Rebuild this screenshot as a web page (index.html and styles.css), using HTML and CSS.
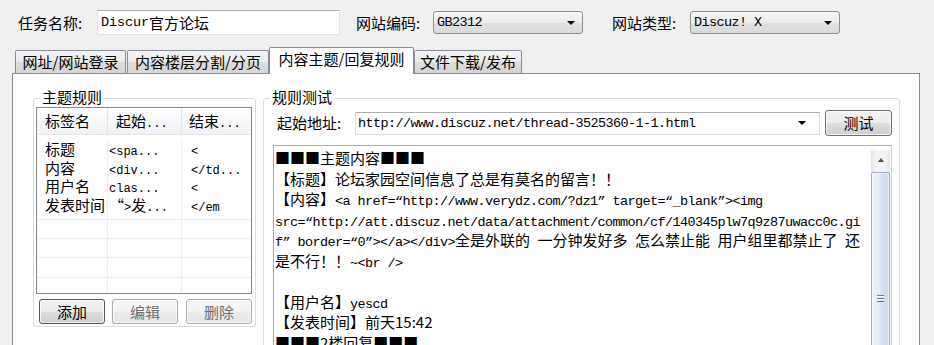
FILE: index.html
```html
<!DOCTYPE html>
<html lang="zh-CN">
<head>
<meta charset="utf-8">
<title>采集任务</title>
<link rel="stylesheet" href="styles.css">
</head>
<body>
<div class="toprow">
  <span class="lbl lbl-name">任务名称:</span>
  <div class="textbox"><span class="m m-name">Discur</span>官方论坛</div>
  <span class="lbl lbl-enc">网站编码:</span>
  <div class="combo"><span class="m">GB2312</span><span class="arrow"></span></div>
  <span class="lbl lbl-type">网站类型:</span>
  <div class="combo"><span class="m">Discuz! X</span><span class="arrow"></span></div>
</div>
<div class="tabs">
  <div class="tab t1">网址/网站登录</div>
  <div class="tab t2">内容楼层分割/分页</div>
  <div class="tab t3 active">内容主题/回复规则</div>
  <div class="tab t4">文件下载/发布</div>
</div>
<div class="panel">
  <div class="group gleft">
    <div class="gtitle">主题规则</div>
    <div class="list">
      <div class="lhead">
        <div class="c c1">标签名</div>
        <div class="c c2">起始<span class="ms">...</span></div>
        <div class="c c3">结束<span class="ms">...</span></div>
      </div>
      <div class="lbody">
        <div class="lrow"><div class="c c1">标题</div><div class="c c2"><span class="ms">&lt;spa...</span></div><div class="c c3"><span class="ms">&lt;</span></div></div>
        <div class="lrow"><div class="c c1">内容</div><div class="c c2"><span class="ms">&lt;div...</span></div><div class="c c3"><span class="ms">&lt;/td...</span></div></div>
        <div class="lrow"><div class="c c1">用户名</div><div class="c c2"><span class="ms">clas...</span></div><div class="c c3"><span class="ms">&lt;</span></div></div>
        <div class="lrow"><div class="c c1">发表时间</div><div class="c c2">“<span class="ms">&gt;</span>发<span class="ms">...</span></div><div class="c c3"><span class="ms">&lt;/em</span></div></div>
        <div class="erow e0"><div class="c c1"></div><div class="c c2"></div><div class="c c3"></div></div>
        <div class="erow e1"><div class="c c1"></div><div class="c c2"></div><div class="c c3"></div></div>
        <div class="erow e1"><div class="c c1"></div><div class="c c2"></div><div class="c c3"></div></div>
        <div class="erow e2"><div class="c c1"></div><div class="c c2"></div><div class="c c3"></div></div>
        <div class="erow e3"><div class="c c1"></div><div class="c c2"></div><div class="c c3"></div></div>
      </div>
    </div>
    <div class="btns">
      <button class="btn def">添加</button>
      <button class="btn dis">编辑</button>
      <button class="btn dis">删除</button>
    </div>
  </div>
  <div class="group gright">
    <div class="gtitle">规则测试</div>
    <div class="urlrow">
      <span class="lbl lbl-url">起始地址:</span>
      <div class="ucombo"><span class="m">http://www.discuz.net/thread-3525360-1-1.html</span><span class="arrow"></span></div>
      <button class="btn test">测试</button>
    </div>
    <div class="tarea">
      <div class="tcontent">
        <div class="ln">■■■主题内容■■■</div>
        <div class="ln">【标题】论坛家园空间信息了总是有莫名的留言！！</div>
        <div class="ln">【内容】<span class="m">&lt;a href=“http://www.verydz.com/?dz1” target=“_blank”&gt;&lt;img</span></div>
        <div class="ln"><span class="m">src=“http://att.discuz.net/data/attachment/common/cf/140345plw7q9z87uwacc0c.gi</span></div>
        <div class="ln"><span class="m">f” border=“0”&gt;&lt;/a&gt;&lt;/div&gt;</span>全是外联的&ensp;一分钟发好多&ensp;怎么禁止能&ensp;用户组里都禁止了&ensp;还</div>
        <div class="ln">是不行！！<span class="m">~&lt;br /&gt;</span></div>
        <div class="ln"></div>
        <div class="ln">【用户名】<span class="m">yescd</span></div>
        <div class="ln">【发表时间】前天15:42</div>
        <div class="ln">■■■2楼回复■■■</div>
      </div>
      <div class="vscroll">
        <div class="sbtn"><span class="uparrow"></span></div>
        <div class="thumb"><span class="grip"></span></div>
      </div>
    </div>
  </div>
</div>
</body>
</html>
```
FILE: styles.css
```css
* { box-sizing: border-box; }
html, body { margin: 0; padding: 0; }
body {
  width: 934px;
  height: 345px;
  overflow: hidden;
  background: #f0f0f0;
  font-family: "Noto Sans CJK SC", "Noto Sans", sans-serif;
  font-size: 15px;
  color: #000;
}
.m {
  font-family: "Liberation Mono", monospace;
  font-size: 13.5px;
  letter-spacing: -0.6px;
}
.ms {
  font-family: "Liberation Mono", monospace;
  font-size: 12px;
}

/* top row */
.toprow {
  display: flex;
  align-items: center;
  height: 25px;
  margin-top: 10px;
  padding-left: 18px;
}
.lbl { white-space: nowrap; line-height: 20px; }
.lbl-name { width: 79px; }
.lbl-enc { width: 77px; margin-left: 16px; }
.lbl-type { width: 78px; margin-left: 29px; }
.textbox {
  width: 243px;
  height: 25px;
  background: #fff;
  border: 1px solid #dbe3ea;
  border-top-color: #abadb3;
  display: flex;
  align-items: center;
  padding-left: 3px;
  line-height: 20px;
}
.m-name { letter-spacing: -0.1px; }
.combo {
  width: 150px;
  height: 23px;
  border: 1px solid #8e8f8f;
  border-radius: 3px;
  background: linear-gradient(#f6f6f6, #ececec 50%, #e2e2e2 51%, #dadada);
  display: flex;
  align-items: center;
  justify-content: space-between;
  padding: 0 7px 0 3px;
}
.arrow {
  width: 0;
  height: 0;
  border-left: 4px solid transparent;
  border-right: 4px solid transparent;
  border-top: 4px solid #000;
}

/* tabs */
.tabs {
  display: flex;
  align-items: flex-end;
  height: 26px;
  margin-top: 12px;
  padding-left: 15px;
  position: relative;
  z-index: 1;
}
.tab {
  height: 23px;
  border: 1px solid #898c95;
  border-bottom: none;
  border-radius: 2px 2px 0 0;
  background: linear-gradient(#f3f3f3, #ebebeb 50%, #dddddd 51%, #d5d5d5);
  text-align: center;
  line-height: 22px;
  white-space: nowrap;
}
.t1 { width: 111px; }
.t2 { width: 142px; margin-left: 1px; }
.t3 { width: 145px; }
.t4 { width: 108px; }
.tab.active {
  height: 27px;
  margin-bottom: -1px;
  background: #fff;
}

/* panel */
.panel {
  display: flex;
  align-items: flex-start;
  width: 908px;
  height: 300px;
  margin-left: 12px;
  border: 1px solid #898c95;
  background: #fff;
  padding-left: 20px;
}
.group {
  position: relative;
  border: 1px solid #d5dfe5;
  border-radius: 3px;
  margin-top: 24px;
}
.gtitle {
  position: absolute;
  top: -12px;
  left: 6px;
  padding: 0 2px;
  background: #fff;
  line-height: 20px;
}
.gleft {
  width: 223px;
  height: 229px;
  padding: 8px 0 0 2px;
}

/* list view */
.list {
  width: 216px;
  height: 187px;
  border: 1px solid #828790;
  background: #fff;
  overflow: hidden;
}
.lhead {
  display: flex;
  height: 27px;
  border-bottom: 1px solid #e2e3e5;
  background: linear-gradient(#ffffff, #f7f8f9 50%, #f1f2f4);
  line-height: 26px;
}
.c { white-space: nowrap; overflow: hidden; }
.c1 { width: 71px; padding-left: 8px; }
.c2 { width: 74px; }
.c3 { width: 69px; }
.lhead .c { border-right: 1px solid #e3e4e6; }
.lhead .c2 { padding-left: 8px; }
.lhead .c3 { padding-left: 7px; border-right: none; }
.lbody { padding-top: 5px; }
.lrow {
  display: flex;
  height: 18.5px;
}
.lrow .c { border-right: 1px solid #f0f0f0; line-height: 18px; height: 18.5px; overflow: visible; }
.lrow .c2 { padding-left: 1px; }
.lrow .c3 { padding-left: 9px; border-right: none; }
.erow { display: flex; border-bottom: 1px solid #ececec; }
.erow .c { border-right: 1px solid #ececec; }
.erow .c3 { border-right: none; }
.e0 { height: 6px; }
.e1 { height: 19px; }
.e2 { height: 20px; }
.e3 { height: 30px; border-bottom: none; }

/* buttons */
.btns {
  display: flex;
  gap: 7px;
  margin-top: 5px;
  padding-left: 3px;
}
.btn {
  width: 66px;
  height: 25px;
  padding: 0;
  font-family: inherit;
  font-size: 15px;
  color: #000;
  border: 1px solid #707070;
  border-radius: 3px;
  background: linear-gradient(#f2f2f2, #ebebeb 50%, #dddddd 51%, #cfcfcf);
  box-shadow: inset 0 0 0 1px rgba(255,255,255,0.7);
  line-height: 22px;
}
.btn.def {
  border-color: #5a5a5a;
}
.btn.dis {
  color: #6f6f6f;
  border-color: #a9acae;
  background: linear-gradient(#f8f8f8, #f2f2f2 50%, #ebebeb 51%, #e6e6e6);
}
.btns .btn:last-child { margin-left: 1px; }

/* right group */
.gright {
  width: 637px;
  height: 280px;
  margin-left: 7px;
  padding: 11px 0 0 9px;
}
.urlrow {
  display: flex;
  align-items: center;
  height: 26px;
}
.lbl-url { width: 78px; margin-left: 4px; }
.ucombo {
  width: 465px;
  height: 23px;
  background: #fff;
  border: 1px solid #dbdfe6;
  border-top-color: #abadb3;
  display: flex;
  align-items: center;
  justify-content: space-between;
  padding: 0 13px 0 2px;
}
.btn.test {
  width: 67px;
  height: 26px;
  margin-left: 5px;
}

/* text area */
.tarea {
  display: flex;
  width: 619px;
  height: 230px;
  margin-top: 9px;
  background: #fff;
  border: 1px solid #c9ced6;
  border-top-color: #abadb3;
  border-left-color: #a4a8ae;
}
.tcontent {
  flex: 1;
  padding: 2px 0 0 1px;
  overflow: hidden;
}
.ln { height: 20.5px; line-height: 20.5px; white-space: pre; }
.vscroll {
  width: 19px;
  margin: 4px 1px 0 0;
  background: linear-gradient(90deg, #e2e3e5, #f4f4f4 25%, #f4f4f4 75%, #e2e3e5);
  display: flex;
  flex-direction: column;
}
.sbtn {
  height: 20px;
  display: flex;
  align-items: center;
  justify-content: center;
}
.uparrow {
  width: 0;
  height: 0;
  border-left: 3.5px solid transparent;
  border-right: 3.5px solid transparent;
  border-bottom: 4px solid #4d4d4d;
}
.thumb {
  margin-top: 2px;
  height: 200px;
  border: 1px solid #9aabc2;
  border-radius: 2px;
  background: linear-gradient(90deg, #eef3f9, #e2eaf4 45%, #d3e0ee 55%, #cddbea);
  box-shadow: inset 0 0 0 1px rgba(255,255,255,0.6);
}
.grip {
  display: block;
  width: 7px;
  height: 7px;
  margin: 122px auto 0;
  background: repeating-linear-gradient(#6c7c92 0 1px, #f6f9fc 1px 2px, transparent 2px 3px);
}
```
